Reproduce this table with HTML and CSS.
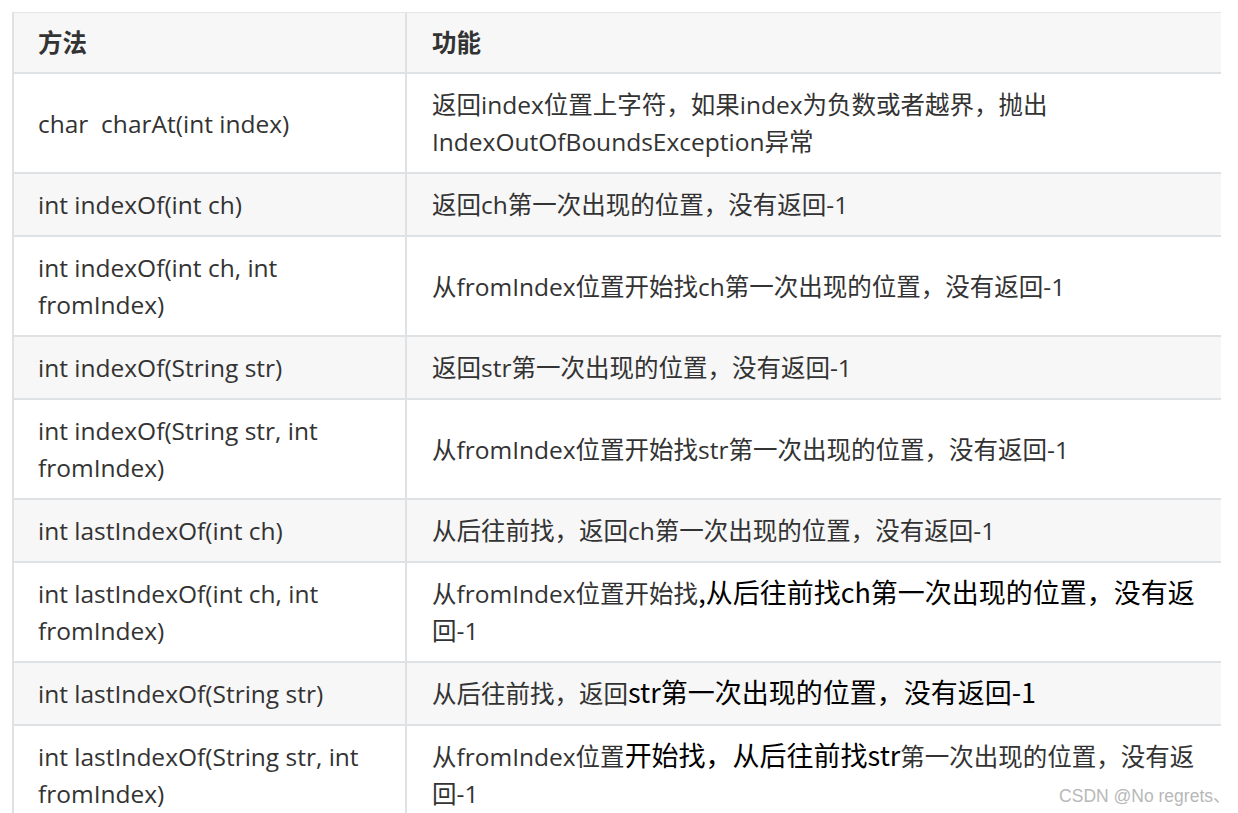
FILE: index.html
```html
<!DOCTYPE html>
<html lang="zh-CN">
<head>
<meta charset="utf-8">
<title>String 方法</title>
<link rel="stylesheet" href="styles.css">
</head>
<body>
<div class="page">
  <table class="methods">
    <colgroup><col class="c1"><col class="c2"></colgroup>
    <thead>
      <tr><th>方法</th><th>功能</th></tr>
    </thead>
    <tbody>
      <tr><td>char&nbsp; charAt(int index)</td><td>返回index位置上字符，如果index为负数或者越界，抛出<br>IndexOutOfBoundsException异常</td></tr>
      <tr><td>int indexOf(int ch)</td><td>返回ch第一次出现的位置，没有返回-1</td></tr>
      <tr><td>int indexOf(int ch, int<br>fromIndex)</td><td>从fromIndex位置开始找ch第一次出现的位置，没有返回-1</td></tr>
      <tr><td>int indexOf(String str)</td><td>返回str第一次出现的位置，没有返回-1</td></tr>
      <tr><td>int indexOf(String str, int<br>fromIndex)</td><td>从fromIndex位置开始找str第一次出现的位置，没有返回-1</td></tr>
      <tr><td>int lastIndexOf(int ch)</td><td>从后往前找，返回ch第一次出现的位置，没有返回-1</td></tr>
      <tr><td>int lastIndexOf(int ch, int<br>fromIndex)</td><td>从fromIndex位置开始找<span class="ed">,从后往前找ch第一次出现的位置，没有返</span><br>回-1</td></tr>
      <tr><td>int lastIndexOf(String str)</td><td>从后往前找，返回<span class="ed">str第一次出现的位置，没有返回-1</span></td></tr>
      <tr><td>int lastIndexOf(String str, int<br>fromIndex)</td><td>从fromIndex位置<span class="ed">开始找，从后往前找str</span>第一次出现的位置，没有返<br>回-1</td></tr>
    </tbody>
  </table>
  <div class="mark">CSDN @No regrets、</div>
</div>
</body>
</html>
```
FILE: styles.css
```css
html, body {
  margin: 0;
  padding: 0;
  background: #ffffff;
}
body {
  width: 1238px;
  height: 813px;
  overflow: hidden;
  position: relative;
}
.page {
  padding: 12px 0 0 12px;
}
.methods {
  border-collapse: separate;
  border-spacing: 0;
  table-layout: fixed;
  width: 1209px;
  border-left: 2px solid #dfe2e5;
  border-top: 1px solid #e4e6e9;
  font-family: "Open Sans", "Noto Sans CJK SC", sans-serif;
  font-size: 24.5px;
  line-height: 37px;
  color: #333333;
}
.c1 { width: 393px; }
.c2 { width: 814px; }
.methods th,
.methods td {
  text-align: left;
  vertical-align: middle;
  border-bottom: 2px solid #dfe2e5;
  padding: 12px 6px 12px 24px;
  white-space: nowrap;
}
.methods th:first-child,
.methods td:first-child {
  border-right: 2px solid #dfe2e5;
}
.methods td:last-child,
.methods th:last-child {
  padding-left: 25px;
}
.methods th {
  font-weight: 700;
  background: #f7f7f8;
  padding-top: 11px;
  padding-bottom: 11px;
}
.methods tbody tr:nth-child(2n) td {
  background: #f7f7f7;
}
.ed {
  color: #000000;
  font-family: "Noto Sans CJK SC", "Open Sans", sans-serif;
  font-size: 27px;
  line-height: 1;
}
.mark {
  position: absolute;
  right: 8px;
  bottom: 6px;
  font-family: "Liberation Sans", Arial, sans-serif;
  font-size: 17.5px;
  color: #b8b8b8;
  background: rgba(255,255,255,0.6);
}
```
